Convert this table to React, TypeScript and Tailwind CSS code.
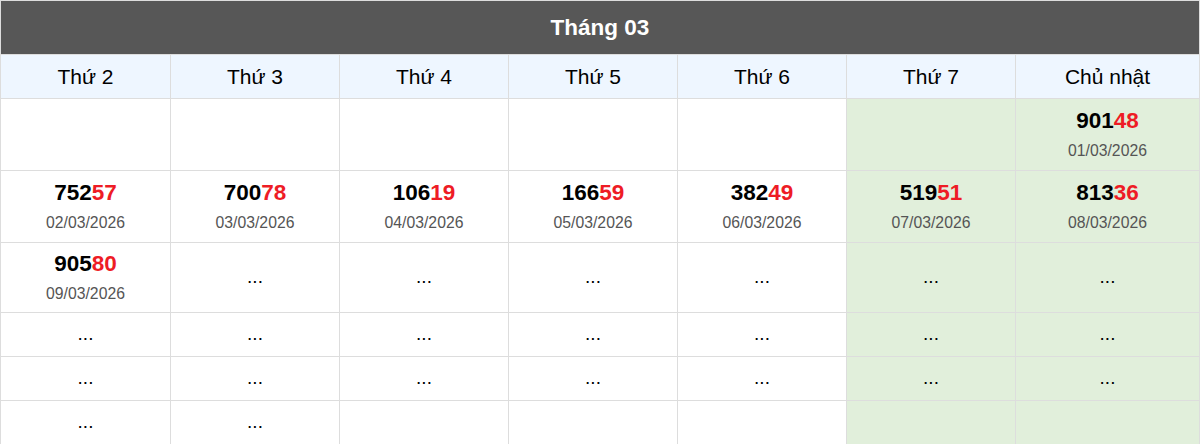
const days = ["Thứ 2", "Thứ 3", "Thứ 4", "Thứ 5", "Thứ 6", "Thứ 7", "Chủ nhật"];

type Cell = { n: string; d: string } | "..." | null;

const rows: { h: string; cells: Cell[] }[] = [
  {
    h: "h-[72px]",
    cells: [null, null, null, null, null, null, { n: "90148", d: "01/03/2026" }],
  },
  {
    h: "h-[72px]",
    cells: [
      { n: "75257", d: "02/03/2026" },
      { n: "70078", d: "03/03/2026" },
      { n: "10619", d: "04/03/2026" },
      { n: "16659", d: "05/03/2026" },
      { n: "38249", d: "06/03/2026" },
      { n: "51951", d: "07/03/2026" },
      { n: "81336", d: "08/03/2026" },
    ],
  },
  {
    h: "h-[70px]",
    cells: [{ n: "90580", d: "09/03/2026" }, "...", "...", "...", "...", "...", "..."],
  },
  { h: "h-[44px]", cells: ["...", "...", "...", "...", "...", "...", "..."] },
  { h: "h-[44px]", cells: ["...", "...", "...", "...", "...", "...", "..."] },
  { h: "h-[44px]", cells: ["...", "...", null, null, null, null, null] },
];

function Content({ c }: { c: Cell }) {
  if (c === null) return null;
  if (c === "...") return <span className="text-[19px] text-black">...</span>;
  return (
    <div className="flex flex-col items-center">
      <div className="text-[22.5px] font-bold leading-[28px] text-black">
        {c.n.slice(0, 3)}
        <span className="text-[#ee1c25]">{c.n.slice(3)}</span>
      </div>
      <div className="mt-[5px] text-[15.75px] leading-[22px] text-[#555]">{c.d}</div>
    </div>
  );
}

export default function App() {
  return (
    <div className="w-[1200px] h-[444px] bg-white font-['Liberation_Sans',Arial,sans-serif]">
      <table className="w-full table-fixed border-collapse">
        <colgroup>
          <col className="w-[170px]" />
          <col className="w-[169px]" />
          <col className="w-[169px]" />
          <col className="w-[169px]" />
          <col className="w-[169px]" />
          <col className="w-[169px]" />
          <col />
        </colgroup>
        <thead>
          <tr className="h-[54px]">
            <th colSpan={7} className="bg-[#575757] border border-[#dddddd] text-white text-[22.5px] font-bold">
              Tháng 03
            </th>
          </tr>
          <tr className="h-[44px]">
            {days.map((d) => (
              <th key={d} className="bg-[#eef6ff] border border-[#dddddd] text-[21px] font-normal text-black">
                {d}
              </th>
            ))}
          </tr>
        </thead>
        <tbody>
          {rows.map((r, i) => (
            <tr key={i} className={r.h}>
              {r.cells.map((c, j) => (
                <td
                  key={j}
                  className={`border border-[#dddddd] text-center align-middle p-0 ${j >= 5 ? "bg-[#e1efdb]" : "bg-white"}`}
                >
                  <Content c={c} />
                </td>
              ))}
            </tr>
          ))}
        </tbody>
      </table>
    </div>
  );
}
